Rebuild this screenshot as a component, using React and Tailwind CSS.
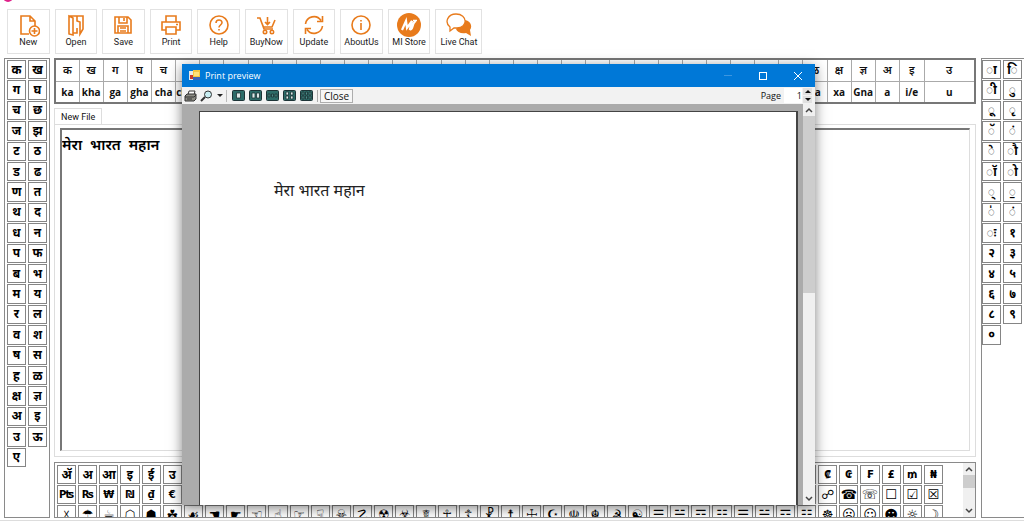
import React, { useState } from 'react';
import clsx from 'clsx';

const LEFT_KEYS = [
  'क', 'ख', 'ग', 'घ', 'च', 'छ', 'ज', 'झ', 'ट', 'ठ', 'ड', 'ढ', 'ण', 'त', 'थ', 'द', 'ध', 'न', 'प', 'फ',
  'ब', 'भ', 'म', 'य', 'र', 'ल', 'व', 'श', 'ष', 'स', 'ह', 'ळ', 'क्ष', 'ज्ञ', 'अ', 'इ', 'उ', 'ऊ', 'ए',
];

const RIGHT_KEYS = [
  '◌ा', '◌ि', '◌ी', '◌ु', '◌ू', '◌ृ', '◌ॅ', '◌ं', '◌े', '◌ौ', '◌ॉ', '◌ो', '◌्', '◌॒', '◌॑', '◌ं', '◌ः',
  '१', '२', '३', '४', '५', '६', '७', '८', '९', '०',
];

const PHONETICS = [
  ['क', 'ka'], ['ख', 'kha'], ['ग', 'ga'], ['घ', 'gha'], ['च', 'cha'], ['छ', 'chha'], ['ज', 'ja'], ['झ', 'jha'],
  ['ट', 'Ta'], ['ठ', 'Tha'], ['ड', 'Da'], ['ढ', 'Dha'], ['ण', 'Na'], ['त', 'ta'], ['थ', 'tha'], ['द', 'da'],
  ['ध', 'dha'], ['न', 'na'], ['प', 'pa'], ['फ', 'pha'], ['ब', 'ba'], ['भ', 'bha'], ['म', 'ma'], ['य', 'ya'],
  ['र', 'ra'], ['ल', 'la'], ['व', 'va'], ['श', 'sha'], ['ष', 'Sha'], ['स', 'sa'], ['ह', 'ha'], ['ळ', 'La'],
  ['क्ष', 'xa'], ['ज्ञ', 'Gna'], ['अ', 'a'], ['इ', 'i/e'], ['उ', 'u'],
];

// Three rows of 42 symbols
const SYMBOLS = [
  ...'ॲ अ आ इ ई उ ऊ ऋ ए ऐ ओ औ क ख ग घ च छ ज झ ट ठ ड ढ ण त थ द ध न प फ ब भ म ₠ ₡ ₢ ₣ ₤ ₥ ₦'.split(' '),
  ...'₧ ₨ ₩ ₪ ₫ € ₭ ₮ ₯ ← ↑ → ↓ ↔ ↕ ↖ ↗ ↘ ↙ ■ □ ▲ △ ▼ ▽ ◆ ◇ ○ ● ★ ☆ ☇ ☈ ☉ ☊ ☋ ☍ ☎ ☏ ☐ ☑ ☒'.split(' '),
  ...'☓ ☂ ☕ ☖ ☗ ☘ ☙ ☚ ☛ ☜ ☝ ☞ ☟ ☠ ☡ ☢ ☣ ☤ ☥ ☦ ☧ ☨ ☩ ☪ ☫ ☬ ☭ ☯ ☰ ☱ ☲ ☳ ☴ ☵ ☶ ☷ ☸ ☹ ☺ ☻ ☼ ☽'.split(' '),
];

const Line = ({ children }) => (
  <svg viewBox="0 0 24 24" className="h-6 w-6 fill-none stroke-[#e87b1c] stroke-[1.6]" aria-hidden="true">
    {children}
  </svg>
);

const TOOLS = [
  {
    label: 'New',
    icon: (
      <Line>
        <path d="M13 21H5V3h9l5 5v5M14 3v5h5" />
        <circle cx="18.5" cy="18" r="5" />
        <path d="M18.5 15v6M15.5 18h6" />
      </Line>
    ),
  },
  {
    label: 'Open',
    icon: (
      <Line>
        <path d="M5 3h14v13l-3 5V9l-3-1V3M5 3l4 2v17l-4-1z" />
        <path d="M9 20h4v-5" />
      </Line>
    ),
  },
  {
    label: 'Save',
    icon: (
      <Line>
        <path d="M4 4h13l3 3v13H4zM8 4v6h8V4M13 5v3M7 20v-7h10v7M9 15h6M9 18h6" />
      </Line>
    ),
  },
  {
    label: 'Print',
    icon: (
      <Line>
        <path d="M7 9V3h10v6M7 17H3V9h18v8h-4M7 14h10v7H7zM17 11.5h2" />
      </Line>
    ),
  },
  {
    label: 'Help',
    icon: (
      <Line>
        <circle cx="12" cy="12" r="9" />
        <path d="M9 10c0-4 6-4 6-.5 0 2.5-3 2.5-3 5M12 16v1.5" />
      </Line>
    ),
  },
  {
    label: 'BuyNow',
    icon: (
      <Line>
        <path d="M3 5h3l4 11h9M7 8l2.5 6H18l3-7M13.5 4v7M11 9l2.5 2.5L16 9" />
        <circle cx="11" cy="19" r="1.7" />
        <circle cx="18" cy="19" r="1.7" />
      </Line>
    ),
  },
  {
    label: 'Update',
    icon: (
      <Line>
        <path d="M3.5 11A8.5 8.5 0 0 1 19 7.500M20.5 3v5.5H15M20.5 13A8.5 8.5 0 0 1 5 16.500M3.5 21v-5.5H9" />
      </Line>
    ),
  },
  {
    label: 'AboutUs',
    icon: (
      <Line>
        <circle cx="12" cy="12" r="9" />
        <path d="M12 10v7M12 7v1.5" />
      </Line>
    ),
  },
  {
    label: 'MI Store',
    icon: (
      <svg viewBox="0 0 24 24" className="h-6 w-6" aria-hidden="true">
        <circle cx="12" cy="12" r="12" className="fill-[#e87b1c]" />
        <path d="M5 17l4-9 1 7 5-7-2 8c3 2 2-7 6-8" className="fill-none stroke-white stroke-[2.2]" />
        <path d="M16 7.500h4" className="stroke-white stroke-[1.5]" />
      </svg>
    ),
  },
  {
    label: 'Live Chat',
    wide: true,
    icon: (
      <svg viewBox="0 0 26 24" className="h-6 w-[26px]" aria-hidden="true">
        <path d="M18 7c6 0 9 6 6 10l1 6-5-3c-5 1-9-1-10-4z" className="fill-[#e87b1c]" />
        <path d="M10 1c12 0 12 14 1 14H8l-4 3v-4C-2 9 2 1 10 1z" className="fill-white stroke-[#e87b1c] stroke-[1.3]" />
      </svg>
    ),
  },
];

function KeyButton({ children, className }) {
  return (
    <button
      type="button"
      className={clsx(
        'flex min-h-0 min-w-0 items-center justify-center border border-[#858585] bg-white leading-none text-black',
        className
      )}
    >
      {children}
    </button>
  );
}

function KeyPanel({ keys, label, className }) {
  return (
    <aside
      aria-label={label}
      className={clsx(
        'grid shrink-0 grid-cols-[19px_19px] grid-rows-20 gap-x-[2px] gap-y-[1px] border border-[#8a8a8a] pt-px pb-[50px]',
        className
      )}
    >
      {keys.map((k, i) => (
        <KeyButton key={i} className="text-[12px] font-bold">
          {k}
        </KeyButton>
      ))}
    </aside>
  );
}

function Toolbar() {
  return (
    <header className="pt-[9px] pl-[7px]">
      <nav className="grid w-[471px] grid-cols-10 gap-[5px]">
        {TOOLS.map((t) => (
          <button
            key={t.label}
            type="button"
            className={clsx(
              'flex h-[45px] flex-col items-center border border-[#e2e2e2] bg-white pt-[3px] whitespace-nowrap',
              t.wide && 'w-[47px]'
            )}
          >
            {t.icon}
            <span className="font-['Roboto',sans-serif] text-[9px] leading-[10px] text-[#222]">{t.label}</span>
          </button>
        ))}
      </nav>
    </header>
  );
}

function PhoneticTable() {
  return (
    <table className="w-full table-fixed border-collapse border-2 border-[#777] text-center">
      <colgroup>
        {PHONETICS.map(([, latin]) => (
          <col key={latin} className={latin === 'u' ? 'w-[51px]' : undefined} />
        ))}
      </colgroup>
      <tbody>
        <tr>
          {PHONETICS.map(([letter, latin]) => (
            <td key={latin} className="h-[22px] border border-[#aaa] p-0 pb-[2px] text-[11px] leading-none font-semibold">
              {letter}
            </td>
          ))}
        </tr>
        <tr>
          {PHONETICS.map(([, latin]) => (
            <td key={latin} className="h-[22px] overflow-hidden border border-[#aaa] p-0 text-[10px] leading-none font-bold">
              {latin}
            </td>
          ))}
        </tr>
      </tbody>
    </table>
  );
}

const Chevron = ({ down }) => (
  <svg viewBox="0 0 8 8" className="h-2 w-2 fill-none stroke-[#444] stroke-[1.5]" aria-hidden="true">
    <path d={down ? 'M1 2l3 3 3-3' : 'M1 6l3-3 3 3'} />
  </svg>
);

function ScrollBar({ thumb }) {
  return (
    <div className="flex w-3 shrink-0 flex-col items-center bg-[#f0f0f0]">
      <button type="button" aria-label="Scroll up" className="flex h-3 w-full shrink-0 items-center justify-center">
        <Chevron />
      </button>
      <div className="min-h-0 w-full flex-1">
        <div className={clsx('w-full bg-[#cdcdcd]', thumb)} />
      </div>
      <button type="button" aria-label="Scroll down" className="flex h-3 w-full shrink-0 items-center justify-center">
        <Chevron down />
      </button>
    </div>
  );
}

function SymbolPanel() {
  return (
    <section aria-label="Symbols" className="mt-[5px] flex h-14 border border-[#8a8a8a]">
      <div className="mr-[20px] ml-[2px] grid min-w-0 flex-1 auto-rows-[19px] grid-cols-42 gap-x-[2px] gap-y-[1px] overflow-hidden pt-[2px]">
        {SYMBOLS.map((s, i) => (
          <KeyButton
            key={i}
            className={
              i < 36
                ? 'text-[12px] font-bold'
                : i < 48
                  ? "font-['DejaVu_Sans',sans-serif] text-[10px] font-bold"
                  : "font-['DejaVu_Sans',sans-serif] text-[13px] font-bold"
            }
          >
            {s}
          </KeyButton>
        ))}
      </div>
      <ScrollBar thumb="h-[13px]" />
    </section>
  );
}

const LAYOUTS = [
  { name: 'One page', shape: 'M4.500 3h4v5h-4z' },
  { name: 'Two pages', shape: 'M3 3h3v5H3zM7.500 3h3v5h-3z' },
  { name: 'Three pages', shape: 'M2 4h2v3H2zM5.500 4h2v3h-2zM9 4h2v3H9z', dim: true },
  { name: 'Four pages', shape: 'M3 2h2.500v3H3zM7.500 2H10v3H7.500zM3 6h2.500v3H3zM7.500 6H10v3H7.500z' },
  { name: 'Six pages', shape: 'M2 2h2v3H2zM5.500 2h2v3h-2zM9 2h2v3H9zM2 6h2v3H2zM5.500 6h2v3h-2zM9 6h2v3H9z', dim: true },
];

function PreviewWindow({ text }) {
  const [page, setPage] = useState(1);

  return (
    <div
      role="dialog"
      aria-label="Print preview"
      className="absolute top-16 right-[209px] bottom-[15px] left-[182px] flex flex-col bg-[#ababab] shadow-[0_3px_12px_rgba(0,0,0,0.5)]"
    >
      <div className="flex h-[23px] shrink-0 items-center bg-[#0078d7] pl-[7px] text-white">
        <svg viewBox="0 0 11 11" className="h-[11px] w-[11px]" aria-hidden="true">
          <path d="M0 1h6v9H0z" className="fill-[#e8e8e8]" />
          <path d="M1 5h3v4H1z" className="fill-[#c83a2a]" />
          <path d="M4 0h7v7H4z" className="fill-[#f5c542]" />
          <path d="M4 7h7v3H4z" className="fill-[#3b62b8]" />
          <path d="M5 2h5v4H5z" className="fill-[#ffe07a]" />
        </svg>
        <h1 className="ml-[5px] flex-1 text-[9px]">Print preview</h1>
        <button type="button" aria-label="Minimize" className="flex h-full w-[35px] items-center justify-center">
          <span className="h-px w-2 bg-[#3c96e0]" />
        </button>
        <button type="button" aria-label="Maximize" className="flex h-full w-[35px] items-center justify-center">
          <span className="h-2 w-2 border border-white" />
        </button>
        <button type="button" aria-label="Close window" className="flex h-full w-[35px] items-center justify-center">
          <svg viewBox="0 0 8 8" className="h-2 w-2 stroke-white" aria-hidden="true">
            <path d="M0 0l8 8M8 0L0 8" />
          </svg>
        </button>
      </div>

      <div className="flex h-[17px] shrink-0 items-center bg-[#f2f2f2] pl-[2px] text-[9px]">
        <button type="button" aria-label="Print">
          <svg viewBox="0 0 13 12" className="h-3 w-[13px] stroke-[#333]" aria-hidden="true">
            <path d="M4 5l1-4h6l-1 4" className="fill-white" />
            <path d="M1 6l2-2h9v5l-2 2H1z" className="fill-[#8b8b83]" />
            <path d="M1 7h9l2-2M3 9h5" className="fill-none" />
          </svg>
        </button>
        <button type="button" aria-label="Zoom" className="ml-[3px] flex items-center gap-1">
          <svg viewBox="0 0 13 12" className="h-3 w-[13px] stroke-[#333]" aria-hidden="true">
            <path d="M5 7l-4 4" className="stroke-2" />
            <circle cx="8" cy="4.5" r="3.5" className="fill-[#c9eef2]" />
          </svg>
          <svg viewBox="0 0 6 3" className="h-[3px] w-[6px] fill-[#222]" aria-hidden="true">
            <path d="M0 0h6L3 3z" />
          </svg>
        </button>
        <span className="mr-[5px] ml-[3px] h-3 w-px bg-[#bbb]" />
        <div className="flex gap-1">
          {LAYOUTS.map((l) => (
            <button key={l.name} type="button" aria-label={l.name}>
              <svg viewBox="0 0 13 11" className="h-[11px] w-[13px]" aria-hidden="true">
                <rect x="0.5" y="0.5" width="12" height="10" rx="1" className="fill-[#2c6b68] stroke-[#1c3336]" />
                <path
                  d={l.shape}
                  className={clsx('stroke-[#1c3336] stroke-[0.8]', l.dim ? 'fill-[#4f8f8a]' : 'fill-[#dbe8e6]')}
                />
              </svg>
            </button>
          ))}
        </div>
        <span className="mr-[2px] ml-[4px] h-3 w-px bg-[#aaa]" />
        <button type="button" className="h-[14px] border border-[#adadad] bg-[#f6f6f6] px-[3px] text-[10px] leading-3">
          Close
        </button>
        <label htmlFor="page" className="ml-auto">
          Page
        </label>
        <input
          id="page"
          value={page}
          onChange={(e) => setPage(e.target.value)}
          className="ml-[3px] h-[15px] w-[18px] bg-white text-right"
        />
        <div className="mr-[3px] ml-px flex flex-col gap-px">
          <button
            type="button"
            aria-label="Next page"
            onClick={() => setPage(Number(page) + 1)}
            className="flex h-[7px] w-[9px] items-center justify-center bg-[#e1e1e1]"
          >
            <svg viewBox="0 0 6 3" className="h-[3px] w-[6px] fill-[#111]" aria-hidden="true">
              <path d="M0 3h6L3 0z" />
            </svg>
          </button>
          <button
            type="button"
            aria-label="Previous page"
            onClick={() => setPage(Number(page) - 1)}
            className="flex h-[7px] w-[9px] items-center justify-center bg-[#e1e1e1]"
          >
            <svg viewBox="0 0 6 3" className="h-[3px] w-[6px] fill-[#111]" aria-hidden="true">
              <path d="M0 0h6L3 3z" />
            </svg>
          </button>
        </div>
      </div>

      <div className="flex min-h-0 flex-1">
        <div className="flex min-w-0 flex-1 pt-[7px] pr-[5px] pl-[17px]">
          <div className="min-w-0 flex-1 border-t border-r-2 border-l border-[#444] bg-white px-[74px] pt-[66px]">
            <p className="text-[16px] leading-6 text-[#222]">{text}</p>
          </div>
        </div>
        <ScrollBar thumb="h-[177px]" />
      </div>
    </div>
  );
}

export default function App() {
  const [text, setText] = useState('मेरा  भारत  महान');

  return (
    <div className="relative flex h-screen flex-col overflow-hidden border-b border-[#ddd] bg-white pb-[2px] font-['Open_Sans','Noto_Sans',sans-serif] text-[#111]">
      <span className="absolute -top-2 left-[3px] h-[10px] w-[10px] rounded-full bg-[#e0218a]" />
      <Toolbar />

      <div className="mt-1 flex min-h-0 flex-1 pl-1">
        <KeyPanel keys={LEFT_KEYS} label="Consonants" className="w-[46px] pl-[2px]" />

        <main className="mr-[5px] ml-[4px] flex min-w-0 flex-1 flex-col">
          <PhoneticTable />
          <div className="mt-[4px] flex">
            <button type="button" className="h-4 border border-b-0 border-[#ddd] px-[6px] font-['Roboto',sans-serif] text-[9px] leading-[14px]">
              New File
            </button>
          </div>
          <div className="flex min-h-0 flex-1 border border-[#ddd] pt-[3px] pr-[5px] pb-[5px] pl-[5px]">
            <textarea
              aria-label="New File"
              value={text}
              onChange={(e) => setText(e.target.value)}
              spellCheck={false}
              className="min-w-0 flex-1 resize-none border border-t-2 border-l-2 border-[#ddd] border-t-[#777] border-l-[#777] bg-white pt-[4px] text-[15px] leading-5 font-semibold text-black outline-none"
            />
          </div>
          <SymbolPanel />
        </main>

        <KeyPanel keys={RIGHT_KEYS} label="Vowel signs and digits" className="w-[43px] border-r-0" />
      </div>

      <PreviewWindow text={text} />
    </div>
  );
}
